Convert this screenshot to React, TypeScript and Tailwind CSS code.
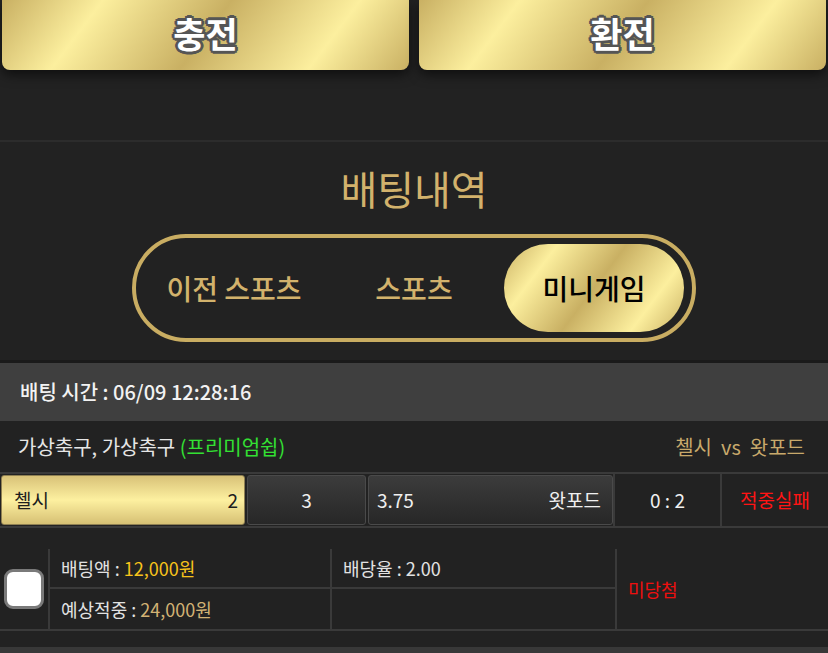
import React from "react";

const gold =
  "bg-[linear-gradient(127deg,#c9b063_0%,#fcef9e_22%,#c9b063_50%,#fcef9e_78%,#c9b063_100%)]";

const outline =
  "[text-shadow:2px_0_#555,-2px_0_#555,0_2px_#555,0_-2px_#555,2px_2px_#555,-2px_-2px_#555,2px_-2px_#555,-2px_2px_#555,3px_0_#555,-3px_0_#555,0_3px_#555,0_-3px_#555]";

function TopButton({ label, className }: { label: string; className?: string }) {
  return (
    <button
      type="button"
      className={`h-[70px] w-[407px] rounded-b-[8px] ${gold} shadow-[0_5px_12px_rgba(0,0,0,0.55)] flex items-center justify-center pb-[5px] ${className ?? ""}`}
    >
      <span className={`text-[35px] font-bold text-white leading-none ${outline}`}>{label}</span>
    </button>
  );
}

export default function App() {
  const tabs = ["이전 스포츠", "스포츠", "미니게임"];
  const active = 2;

  return (
    <div className="w-[828px] h-[653px] overflow-hidden bg-[#222] font-['Noto_Sans_CJK_KR','Noto_Sans',sans-serif]">
      {/* Deposit / withdraw */}
      <div className="flex gap-[10px] pl-[2px]">
        <TopButton label="충전" />
        <TopButton label="환전" />
      </div>

      <div className="mt-[70px] border-t-2 border-[#2c2c2c]">
        {/* Title + tabs */}
        <div className="flex flex-col items-center pt-[24px]">
          <h2 className="text-[40px] leading-[44px] text-[#d2b26c]">배팅내역</h2>
          <div className="mt-[24px] w-[564px] h-[108px] rounded-full border-4 border-[#c9ad62] flex items-center px-[8px]">
            {tabs.map((t, i) => (
              <div
                key={t}
                className={`w-[180px] h-[88px] rounded-full flex items-center justify-center text-[28px] font-medium ${
                  i === active ? `${gold} text-black` : "text-[#d2b26c]"
                }`}
              >
                {t}
              </div>
            ))}
          </div>
        </div>

        {/* Bet item */}
        <div className="mt-[18px] border-t-[3px] border-[#1a1a1a]">
          <div className="h-[58px] bg-[#3f3f3f] flex items-center pl-[20px] text-[20px] font-medium text-[#f2f2f2]">
            배팅 시간 : 06/09 12:28:16
          </div>

          <div className="h-[51px] flex items-center justify-between pl-[18px] pr-[23px] text-[20px]">
            <span className="text-[#e6e6e6]">
              가상축구, 가상축구 <span className="text-[#33e033]">(프리미엄쉽)</span>
            </span>
            <span className="text-[#c8a96b]">
              첼시<span className="mx-[9px]">vs</span>왓포드
            </span>
          </div>

          <div className="flex h-[56px] border-y-2 border-[#3a3a3a] py-[1px] text-[19px]">
            <div className="ml-[1px] w-[244px] rounded-[3px] border border-[#8f8052] bg-[linear-gradient(to_bottom,#d9c278_0%,#fdf0a0_50%,#d6c074_100%)] flex items-center justify-between pl-[12px] pr-[6px] text-[#1e1e1e]">
              <span>첼시</span>
              <span>2</span>
            </div>
            <div className="ml-[2px] w-[119px] rounded-[3px] border border-[#4a4a4a] bg-[linear-gradient(to_bottom,#3c3c3c,#272727)] flex items-center justify-center text-[#f0f0f0]">
              3
            </div>
            <div className="ml-[2px] w-[245px] rounded-[3px] border border-[#4a4a4a] bg-[linear-gradient(to_bottom,#3c3c3c,#272727)] flex items-center justify-between pl-[8px] pr-[11px] text-[#f0f0f0]">
              <span>3.75</span>
              <span>왓포드</span>
            </div>
            <div className="w-[107px] -my-[1px] border-l-2 border-[#3a3a3a] flex items-center justify-center text-[#f0f0f0]">
              0 : 2
            </div>
            <div className="flex-1 -my-[1px] border-l-2 border-[#3a3a3a] flex items-center justify-center text-[#ff1414]">
              적중실패
            </div>
          </div>

          <div className="mt-[21px] flex border-b-2 border-[#3a3a3a] text-[18px]">
            <div className="w-[48px] flex items-center justify-center">
              <div className="w-[40px] h-[40px] rounded-[9px] border-[3px] border-[#7a7a7a] bg-white" />
            </div>
            <div className="w-[569px] border-x-2 border-[#3a3a3a] grid grid-cols-[282px_1fr]">
              <div className="h-[40px] flex items-center pl-[11px] text-[#e2e2e2] border-b-2 border-r-2 border-[#3a3a3a]">
                배팅액 :&nbsp;<span className="text-[#f7c31b]">12,000원</span>
              </div>
              <div className="h-[40px] flex items-center pl-[11px] text-[#e2e2e2] border-b-2 border-[#3a3a3a]">
                배당율 : 2.00
              </div>
              <div className="h-[40px] flex items-center pl-[11px] text-[#e2e2e2] border-r-2 border-[#3a3a3a]">
                예상적중 :&nbsp;<span className="text-[#d2b274]">24,000원</span>
              </div>
              <div className="h-[40px]" />
            </div>
            <div className="flex-1 flex items-center pl-[11px] text-[#ee0f0f]">미당첨</div>
          </div>

          <div className="mt-[16px] h-[20px] bg-[#383838]" />
        </div>
      </div>
    </div>
  );
}
